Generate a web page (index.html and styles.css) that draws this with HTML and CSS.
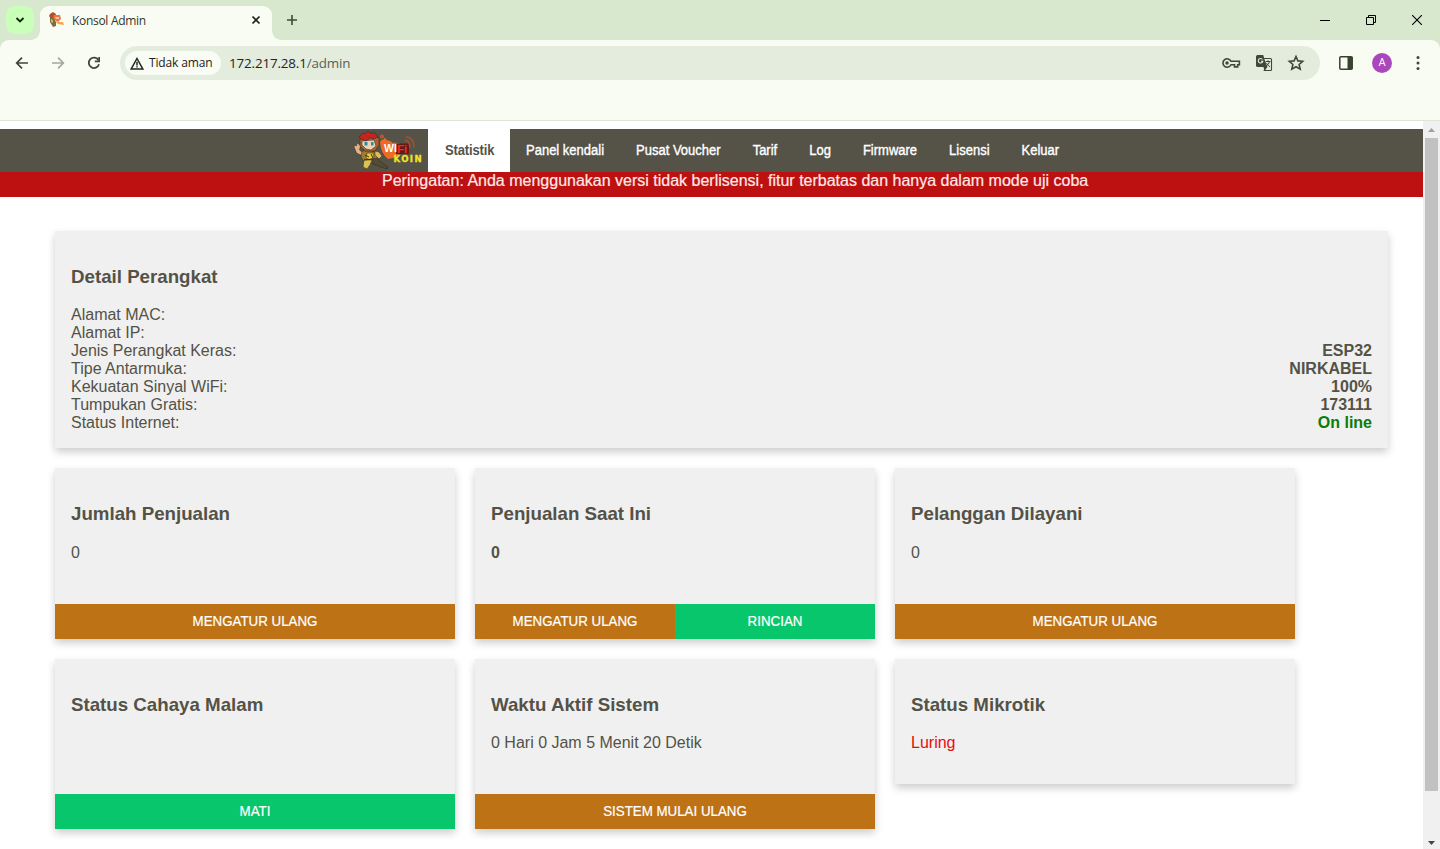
FILE: index.html
```html
<!DOCTYPE html>
<html lang="id">
<head>
<meta charset="utf-8">
<title>Konsol Admin</title>
<link rel="stylesheet" href="styles.css">
</head>
<body>
<div class="window">
  <header class="tabstrip">
    <button class="tab-search"><svg width="10" height="8" viewBox="0 0 10 8"><path d="M1.5 2 5 5.5 8.5 2" fill="none" stroke="#142610" stroke-width="1.9"/></svg></button>
    <div class="tab">
      <svg class="favicon" width="15" height="16" viewBox="0 0 15 16"><path d="M1 2 4 0l3 2-1 4-4 1-2-3z" fill="#b4502d"/><path d="m5 3 6 0 1 4-3 3-5-3z" fill="#ef7546"/><path d="m6 5 4 0 0 2-3 0z" fill="#fbc2a0"/><path d="m1 6 3-1 3 5 0 4-3 1-3-5z" fill="#77713c"/><path d="m6 9 3 1 5 0 1 3-6-1z" fill="#f3a64c"/><path d="m2 7 2 1 0 3-2-1z" fill="#dab073"/></svg>
      <span class="tab-title">Konsol Admin</span>
      <svg class="tab-close" width="10" height="10" viewBox="0 0 10 10"><path d="m1.5 1.5 7 7m0-7-7 7" stroke="#1c2119" stroke-width="1.7"/></svg>
    </div>
    <svg class="new-tab" width="12" height="12" viewBox="0 0 12 12"><path d="M6 1v10M1 6h10" stroke="#40483b" stroke-width="1.6"/></svg>
    <div class="window-buttons">
      <svg width="10" height="12" viewBox="0 0 10 12"><path d="M0 6.5h10" stroke="#000"/></svg>
      <svg width="10" height="10" viewBox="0 0 10 10"><path d="M.5 2.5h7v7h-7zM2.5 2.5v-2h7v7h-2" fill="none" stroke="#000"/></svg>
      <svg width="10" height="10" viewBox="0 0 10 10"><path d="m0 0 10 10M10 0 0 10" stroke="#000" stroke-width="1.1"/></svg>
    </div>
  </header>
  <div class="toolbar">
    <div class="nav-icons">
      <svg width="16" height="16" viewBox="0 0 16 16"><path d="M14 8H3M8 2.7 2.7 8 8 13.3" fill="none" stroke="#3e453a" stroke-width="1.7"/></svg>
      <svg width="16" height="16" viewBox="0 0 16 16"><path d="M2 8h11M8 2.7 13.3 8 8 13.3" fill="none" stroke="#a2a89c" stroke-width="1.7"/></svg>
      <svg width="16" height="16" viewBox="0 0 16 16"><path d="M13 9.3A5.2 5.2 0 1 1 12.4 5" fill="none" stroke="#3e453a" stroke-width="1.8"/><path d="M14 2v5.2H8.8V5.5h3.5V2z" fill="#3e453a"/></svg>
    </div>
    <div class="omnibox">
      <div class="security"><svg width="14" height="13" viewBox="0 0 14 13"><path d="M7 1.5 12.8 12H1.2z" fill="none" stroke="#20281c" stroke-width="1.5"/><path d="M7 4.8v3.7M7 9.2v1.4" stroke="#20281c" stroke-width="1.5"/></svg><span class="security-text">Tidak aman</span></div>
      <div class="url"><span class="host">172.217.28.1</span>/admin</div>
      <div class="omni-actions">
        <svg width="20" height="16" viewBox="0 0 20 16"><path d="M10 6.3h8.4v3.4h-1.7v2.2h-3.2V9.7H10A4.200 4.200 0 1 1 10 6.3z" fill="none" stroke="#3e473a" stroke-width="1.6"/><circle cx="6" cy="8" r="1.7" fill="#3e473a"/></svg>
        <svg width="18" height="18" viewBox="0 0 18 18"><path d="M2.5 1h5.7l3.6 12H2.5A1.5 1.5 0 0 1 1 11.5v-9A1.5 1.5 0 0 1 2.5 1z" fill="#3e473a"/><path d="M8.5 4.5h7q1 0 1 1v10q0 1-1 1H9.3l2.5-3.5z" fill="#e5ecdf" stroke="#3e473a" stroke-width="1.1"/><path d="M7.5 5.500A2.300 2.300 0 1 0 7.800 7.300H5.900" fill="none" stroke="#e5ecdf" stroke-width="1.100"/><path d="M10.500 7.500h5M13 6.200v1.300M14.500 7.500q-.7 3-3.200 4.500M11.500 9q1.500 2.500 3.500 4" fill="none" stroke="#3e473a"/><path d="m9.300 16.500 2.500-3.500H8.500z" fill="#3e473a"/></svg>
        <svg width="18" height="18" viewBox="0 0 18 18"><path d="m9 2.5 1.9 4.4 4.8.4-3.6 3.200 1.100 4.700L9 12.700l-4.200 2.500 1.100-4.700-3.600-3.200 4.800-.4z" fill="none" stroke="#3e473a" stroke-width="1.600"/></svg>
      </div>
    </div>
    <svg class="side-panel" width="14" height="14" viewBox="0 0 14 14"><rect x=".8" y=".8" width="12.4" height="12.4" rx="1" fill="none" stroke="#37432f" stroke-width="1.5"/><path d="M8.500 1h5v12h-5z" fill="#37432f"/></svg>
    <div class="avatar">A</div>
    <svg class="more" width="4" height="16" viewBox="0 0 4 16"><g fill="#3e473a"><circle cx="2" cy="2.5" r="1.5"/><circle cx="2" cy="8" r="1.5"/><circle cx="2" cy="13.5" r="1.5"/></g></svg>
  </div>
  <div class="viewport">
    <main class="page">
      <nav class="menu">
        <div class="logo">
          <svg width="74" height="41" viewBox="0 0 74 41">
            <path d="M26 11q2-4 7-2 4 1 6 3 7-1 8 3-1 9-8 12l-5 1q-7-5-8-17z" fill="#ed6b26"/>
            <circle cx="28" cy="5.500" r="2" fill="#c4562b"/><circle cx="31" cy="8" r="1" fill="#e76e2b"/>
            <path d="M42 12.500h13V23H42z" fill="#651a15"/>
            <path d="M51 9q5 1 5 8M52 5.500q8 1.500 8 11" fill="none" stroke="#a6502d" stroke-width="1.600"/>
            <g stroke="#2a281f" stroke-width=".5">
              <path d="m0 16 1-2 1.500 1 .5-3 2 1 1.500 2-1 4 4 3-1 3-6-3z" fill="#e5b088"/>
              <path d="m8 20 10 0 6 3-1 6-6 3-7-1-3-5z" fill="#a07c2f"/>
              <path d="m13 22 6 0 1 4-4 3-4-2z" fill="#edcb38"/>
              <path d="m6 9 3-5 11-1 5 5 0 6-4 6-10 0-5-5z" fill="#aa632e"/>
              <path d="m8 10 12-1 2 6-5 4-5-1-4-4z" fill="#edd4b6"/>
              <path d="m5 6 4-4 2 1 3-3 2 2 5 0 3 4-4 2-4-1-4 3-5-2z" fill="#c52421"/>
              <path d="m10 29 8 0-2 5-3 4-4-2z" fill="#dfc050"/>
              <path d="m18 28 6-1 3 4 7 5-1 2-6-2-8-3z" fill="#554a35"/>
              <path d="m21 20 4 1 3 4-3 3-4-4z" fill="#e0ba62"/>
            </g>
            <path d="M10.500 11h3v3.500h-3zm6.500 0h2.500v3.500H17z" fill="#32899f"/>
            <path d="m11 24 4 2m2-3 2 4M10 29l8-1" fill="none" stroke="#3a3021"/>
            <text class="logo-wi" x="30" y="21">WI</text><text class="logo-fi" x="43" y="21.500">Fi</text><text class="logo-koin" x="39.500" y="30.500" textLength="28">KOIN</text>
          </svg>
        </div>
        <a class="item active"><span>Statistik</span></a><a class="item"><span>Panel kendali</span></a><a class="item"><span>Pusat Voucher</span></a><a class="item"><span>Tarif</span></a><a class="item"><span>Log</span></a><a class="item"><span>Firmware</span></a><a class="item"><span>Lisensi</span></a><a class="item"><span>Keluar</span></a>
      </nav>
      <div class="warning">Peringatan: Anda menggunakan versi tidak berlisensi, fitur terbatas dan hanya dalam mode uji coba</div>
      <section class="cards">
        <article class="card device">
          <h3>Detail Perangkat</h3>
          <dl>
            <div><dt>Alamat MAC:</dt><dd></dd></div>
            <div><dt>Alamat IP:</dt><dd></dd></div>
            <div><dt>Jenis Perangkat Keras:</dt><dd>ESP32</dd></div>
            <div><dt>Tipe Antarmuka:</dt><dd>NIRKABEL</dd></div>
            <div><dt>Kekuatan Sinyal WiFi:</dt><dd>100%</dd></div>
            <div><dt>Tumpukan Gratis:</dt><dd>173111</dd></div>
            <div><dt>Status Internet:</dt><dd class="online">On line</dd></div>
          </dl>
        </article>
        <div class="grid">
          <article class="card sales"><h3>Jumlah Penjualan</h3><p>0</p><div class="actions"><button class="orange"><span>MENGATUR ULANG</span></button></div></article>
          <article class="card sales"><h3>Penjualan Saat Ini</h3><p><b>0</b></p><div class="actions"><button class="orange"><span>MENGATUR ULANG</span></button><button class="green"><span>RINCIAN</span></button></div></article>
          <article class="card sales"><h3>Pelanggan Dilayani</h3><p>0</p><div class="actions"><button class="orange"><span>MENGATUR ULANG</span></button></div></article>
          <article class="card status"><h3>Status Cahaya Malam</h3><div class="actions"><button class="green"><span>MATI</span></button></div></article>
          <article class="card status"><h3>Waktu Aktif Sistem</h3><p>0 Hari 0 Jam 5 Menit 20 Detik</p><div class="actions"><button class="orange"><span>SISTEM MULAI ULANG</span></button></div></article>
          <article class="card mikrotik"><h3>Status Mikrotik</h3><p class="offline">Luring</p></article>
        </div>
      </section>
    </main>
    <aside class="scrollbar">
      <svg width="17" height="17" viewBox="0 0 17 17"><path d="m5 11 3.5-4 3.5 4z" fill="#a0a0a0"/></svg>
      <div class="thumb"></div>
      <svg class="down" width="17" height="17" viewBox="0 0 17 17"><path d="m5 9 3.5 4L12 9z" fill="#454545"/></svg>
    </aside>
  </div>
</div>
</body>
</html>
```
FILE: styles.css
```css
* { box-sizing: border-box; }
body { margin: 0; overflow: hidden; background: #fff; font: 16px/18px "Liberation Sans", Arial, sans-serif; color: #545247; }
svg { display: block; flex: none; }
button { border: 0; padding: 0; margin: 0; }
.window { width: 1440px; height: 849px; display: flex; flex-direction: column; background: #d8e8cf; }
.tabstrip { height: 40px; flex: none; display: flex; align-items: center; padding-left: 6px; }
.tab-search { width: 28px; height: 28px; border-radius: 9px; background: #c9ffb9; display: flex; align-items: center; justify-content: center; }
.tab { position: relative; width: 232px; height: 34px; margin: 6px 0 0 6px; padding: 0 11px 6px 9px; border-radius: 9px 9px 0 0; background: #f8fcf3; display: flex; align-items: center; }
.tab::before, .tab::after { content: ""; position: absolute; bottom: 0; width: 9px; height: 9px; }
.tab::before { left: -9px; background: radial-gradient(circle at 0 0, #d8e8cf 8.5px, #f8fcf3 9px); }
.tab::after { right: -9px; background: radial-gradient(circle at 100% 0, #d8e8cf 8.5px, #f8fcf3 9px); }
.tab-title { margin: 2px 0 0 8px; font: 12px/16px "Open Sans", "Noto Sans", sans-serif; letter-spacing: -.3px; color: #30352d; }
.tab-close { margin-left: auto; }
.new-tab { margin-left: 14px; }
.window-buttons { margin: 0 18px 0 auto; display: flex; align-items: center; gap: 36px; }
.toolbar { height: 81px; flex: none; background: #f8fcf3; border-radius: 9px 9px 0 0; display: flex; align-items: flex-start; padding-top: 6px; box-shadow: inset 0 -1px #dfe3da; }
.nav-icons { display: flex; gap: 20px; margin: 9px 18px 0 14px; }
.omnibox { width: 1200px; height: 34px; border-radius: 17px; background: #e4ecde; display: flex; align-items: center; padding: 0 15px 0 5px; }
.security { width: 96px; height: 24px; border-radius: 12px; background: #f9fcf5; display: flex; align-items: center; padding-left: 5px; gap: 5px; }
.security-text { white-space: nowrap; font: 500 12px/18px "Open Sans", "Noto Sans", sans-serif; letter-spacing: -.15px; color: #1c2119; }
.url { margin-left: 8px; font: 13.4px/18px "Open Sans", "Noto Sans", sans-serif; letter-spacing: -.15px; color: #596154; }
.host { color: #20251d; }
.omni-actions { margin-left: auto; display: flex; align-items: center; gap: 14px; }
.side-panel { margin: 10px 0 0 19px; }
.avatar { width: 20px; height: 20px; margin: 7px 0 0 19px; border-radius: 50%; background: #ab47bc; color: #fff; font: 11px/20px Roboto, sans-serif; text-align: center; }
.more { margin: 9px 0 0 24px; }
.viewport { flex: 1; min-height: 0; display: flex; background: #fff; }
.page { width: 1423px; padding-top: 8px; overflow: hidden; }
.menu { height: 43px; background: #555347; display: flex; padding-left: 354px; }
.logo { width: 74px; padding-top: 2px; }
.logo-wi, .logo-fi { font: bold 10.5px "Liberation Sans", sans-serif; fill: #fff; }
.logo-fi { font-size: 11.5px; fill: #f02d25; }
.logo-koin { font: bold 8.5px "DejaVu Sans", sans-serif; fill: #f2e522; stroke: #f2e522; stroke-width: .3px; }
.item { padding: 0 16px; line-height: 43px; font-size: 13px; -webkit-text-stroke: .35px; color: #fff; white-space: nowrap; }
.item span { display: inline-block; transform: scaleY(1.08); }
.item.active { width: 82px; padding-left: 17px; font-weight: bold; letter-spacing: -.15px; -webkit-text-stroke: 0; color: #555347; background: #fff; }
.warning { height: 25px; padding-left: 382px; background: #bd1010; color: #ffe8e6; -webkit-text-stroke: .2px; white-space: nowrap; }
.cards { padding: 34px 35px 0 55px; display: flex; flex-direction: column; gap: 20px; }
.card { background: #f0f0f0; box-shadow: 0 4px 8px rgba(0,0,0,.2); display: flex; flex-direction: column; padding: 0 16px; }
.card h3 { margin: 35px 0 0; font-size: 18.72px; line-height: 22px; }
.card p { margin: 17px 0 0; line-height: 20px; }
.device { width: 1333px; height: 217px; }
.device dl { margin: 18px 0 0; }
.device dl div { display: flex; justify-content: space-between; height: 18px; }
dd { margin: 0; font-weight: bold; }
.online { color: #087d08; }
.grid { display: grid; grid-template-columns: repeat(3, 400px); column-gap: 20px; row-gap: 20px; align-items: start; }
.sales { height: 171px; }
.status { height: 170px; }
.mikrotik { height: 125px; }
.sales p { margin-top: 18px; }
.offline { color: #e80c0c; }
.actions { margin: auto -16px 0; height: 35px; display: flex; }
.actions button { flex: 1; color: #fff; font: 13.33px/35px "Liberation Sans", sans-serif; -webkit-text-stroke: .2px; }
.actions span { display: inline-block; transform: scaleY(1.07); }
.orange { background: #bd7216; }
.green { background: #08c66c; }
.scrollbar { width: 17px; background: #f0f0f0; display: flex; flex-direction: column; }
.thumb { width: 13px; height: 653px; margin-left: 2px; background: #c1c1c1; }
.down { margin-top: auto; }
```
